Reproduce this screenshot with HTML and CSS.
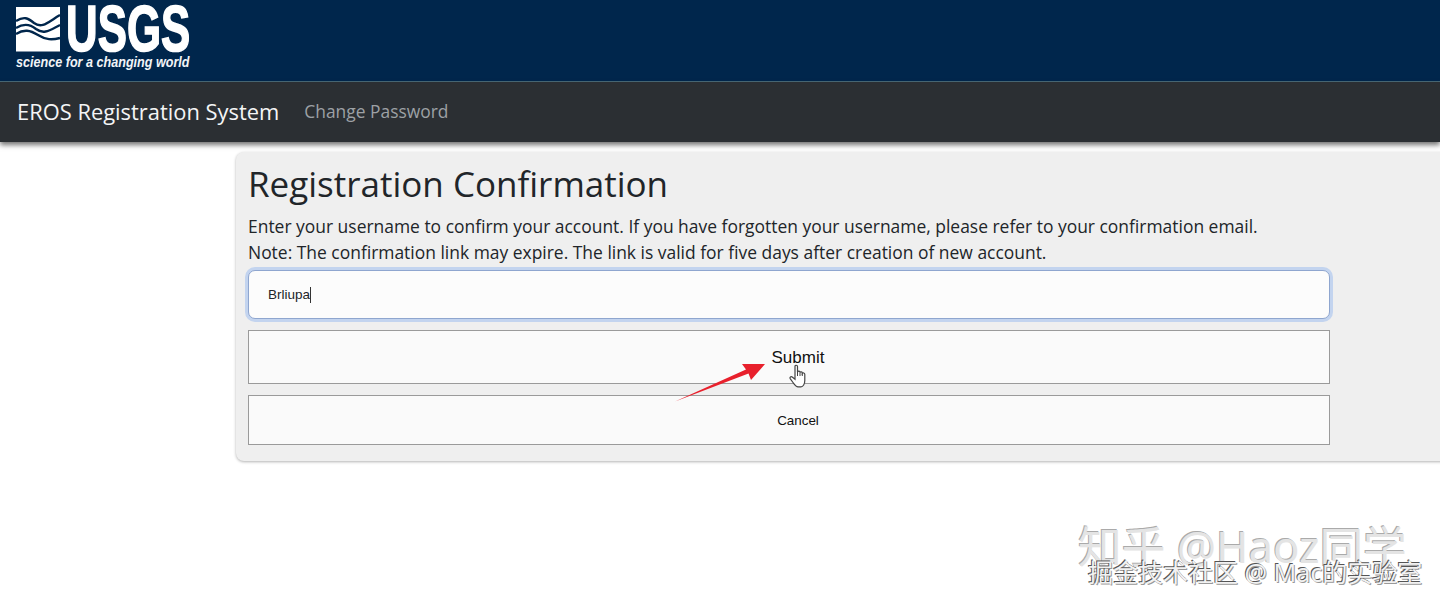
FILE: index.html
```html
<!DOCTYPE html>
<html lang="en">
<head>
<meta charset="utf-8">
<title>Registration Confirmation</title>
<link rel="stylesheet" href="styles.css">
</head>
<body>
<header class="brand-bar">
  <svg class="logo" width="200" height="80" viewBox="0 0 200 80" aria-label="USGS science for a changing world">
    <rect x="16" y="7" width="44" height="44.5" fill="#fff"/>
    <path d="M16 21 C24 16 28 18 34 23 C42 29 48 22 60 15 M16 28 C24 23 30 24 36 29 C44 35 50 30 60 25 M16 34 C24 29 30 30 38 35 C46 40 52 40 60 38" fill="none" stroke="#00264c" stroke-width="2.4"/>
    <text class="logo-word" transform="translate(66 51) scale(0.685 1)">USGS</text>
    <text class="logo-tag" transform="translate(16 67) scale(0.84 1)">science for a changing world</text>
  </svg>
</header>
<nav class="nav-bar">
  <a class="nav-title">EROS Registration System</a>
  <a class="nav-link">Change Password</a>
</nav>
<main class="panel">
  <h1 class="panel-title">Registration Confirmation</h1>
  <p class="panel-text">Enter your username to confirm your account. If you have forgotten your username, please refer to your confirmation email.</p>
  <p class="panel-text">Note: The confirmation link may expire. The link is valid for five days after creation of new account.</p>
  <div class="field"><span class="field-value">Brliupa</span><span class="caret"></span></div>
  <button class="btn btn-submit">Submit</button>
  <button class="btn btn-cancel">Cancel</button>
</main>
<svg class="arrow" width="100" height="50" viewBox="0 0 100 50">
  <path d="M0 47.5 L71 15.5 L67 10 L90 10 L76 26 L73.500 19.500 Z" fill="#e8202c"/>
</svg>
<svg class="hand" width="20" height="24" viewBox="0 0 20 24">
  <path d="M7 15.300 V2.500 C7 0.800 9.500 0.800 9.500 2.500 V8 C10 6.800 12 6.800 12 8.300 V8.500 C12.500 7.500 14.300 7.500 14.300 9 V9.500 C15 8.600 16.800 8.800 16.800 10.400 V16.500 C16.800 20 15 22.800 13 22.800 H10 C8 22.800 6.500 20.500 5 18.500 L2.200 14.600 C1.300 13.200 3 12 4.200 13 Z" fill="#fff" stroke="#444" stroke-width="1.200"/>
  <path d="M9.500 8 V12 M12 8.500 V12 M14.300 9.500 V12" fill="none" stroke="#444" stroke-width="1"/>
</svg>
<div class="wm wm-zhihu">知乎 @Haoz同学</div>
<div class="wm wm-juejin">掘金技术社区 @ Mac的实验室</div>
</body>
</html>
```

FILE: styles.css
```css
html, body {
  margin: 0;
  height: 605px;
  overflow: hidden;
  background: #fff;
}
body {
  font-family: "Open Sans", "Noto Sans", sans-serif;
  color: #212529;
  position: relative;
}
.brand-bar {
  height: 81px;
  background: #00264c;
  border-bottom: 1px solid #4a6a78;
}
.logo { display: block; }
.logo-word {
  font: 700 64px "Liberation Sans", sans-serif;
  fill: #fff;
  stroke: #fff;
  stroke-width: 1.6px;
}
.logo-tag {
  font: italic 700 15px "Liberation Sans", sans-serif;
  fill: #f2f4f7;
}
.nav-bar {
  height: 60px;
  background: #2b2f33;
  display: flex;
  align-items: center;
  padding: 0 0 2px 17px;
  box-sizing: border-box;
  box-shadow: 0 3px 5px rgba(0, 0, 0, 0.55);
  position: relative;
}
.nav-title {
  font-size: 21.9px;
  color: #f4f5f6;
  margin-right: 25px;
}
.nav-link {
  font-size: 17.4px;
  color: #9da1a5;
}
.panel {
  margin: 10px 0 0 236px;
  width: 1240px;
  height: 309px;
  box-sizing: border-box;
  padding: 9px 12px;
  background: #efefef;
  border-radius: 8px;
  box-shadow: 0 1px 3px rgba(0, 0, 0, 0.3);
}
.panel-title {
  font-size: 35px;
  font-weight: 400;
  line-height: 46px;
  margin: 0 0 6px;
}
.panel-text {
  font-size: 17.45px;
  line-height: 26px;
  margin: 0;
  white-space: nowrap;
}
.field {
  width: 1082px;
  height: 49px;
  box-sizing: border-box;
  margin-top: 5px;
  padding-left: 19px;
  display: flex;
  align-items: center;
  background: #fcfcfc;
  border: 1px solid #8fa6cf;
  border-radius: 7px;
  box-shadow: 0 0 0 3px #c3d4ef;
  font: 13.5px "Liberation Sans", sans-serif;
}
.caret {
  width: 1px;
  height: 16px;
  background: #333;
}
.btn {
  display: block;
  width: 1082px;
  box-sizing: border-box;
  background: #fafafa;
  border: 1px solid #9a9a9a;
  border-radius: 0;
  font-family: "Liberation Sans", sans-serif;
  color: #111;
  padding: 0 0 0 18px;
}
.btn-submit {
  height: 54px;
  margin-top: 11px;
  padding-top: 2px;
  font-size: 17px;
}
.btn-cancel {
  height: 50px;
  margin-top: 11px;
  font-size: 13.4px;
}
.arrow {
  position: absolute;
  left: 675px;
  top: 354px;
}
.hand {
  position: absolute;
  left: 788px;
  top: 364px;
}
.wm {
  position: absolute;
  white-space: nowrap;
  font-family: "Noto Sans", "Noto Sans CJK SC", sans-serif;
}
.wm-zhihu {
  left: 1078px;
  top: 518px;
  font-size: 43.7px;
  line-height: 56px;
  color: #e4e4e4;
  text-shadow: -1px -1px 0 #aaa;
}
.wm-juejin {
  left: 1088px;
  top: 556px;
  font-size: 25px;
  line-height: 32px;
  color: #f2f2f2;
  text-shadow: -1px -1px 0 #555, 1px 1px 0 #999;
}
```
